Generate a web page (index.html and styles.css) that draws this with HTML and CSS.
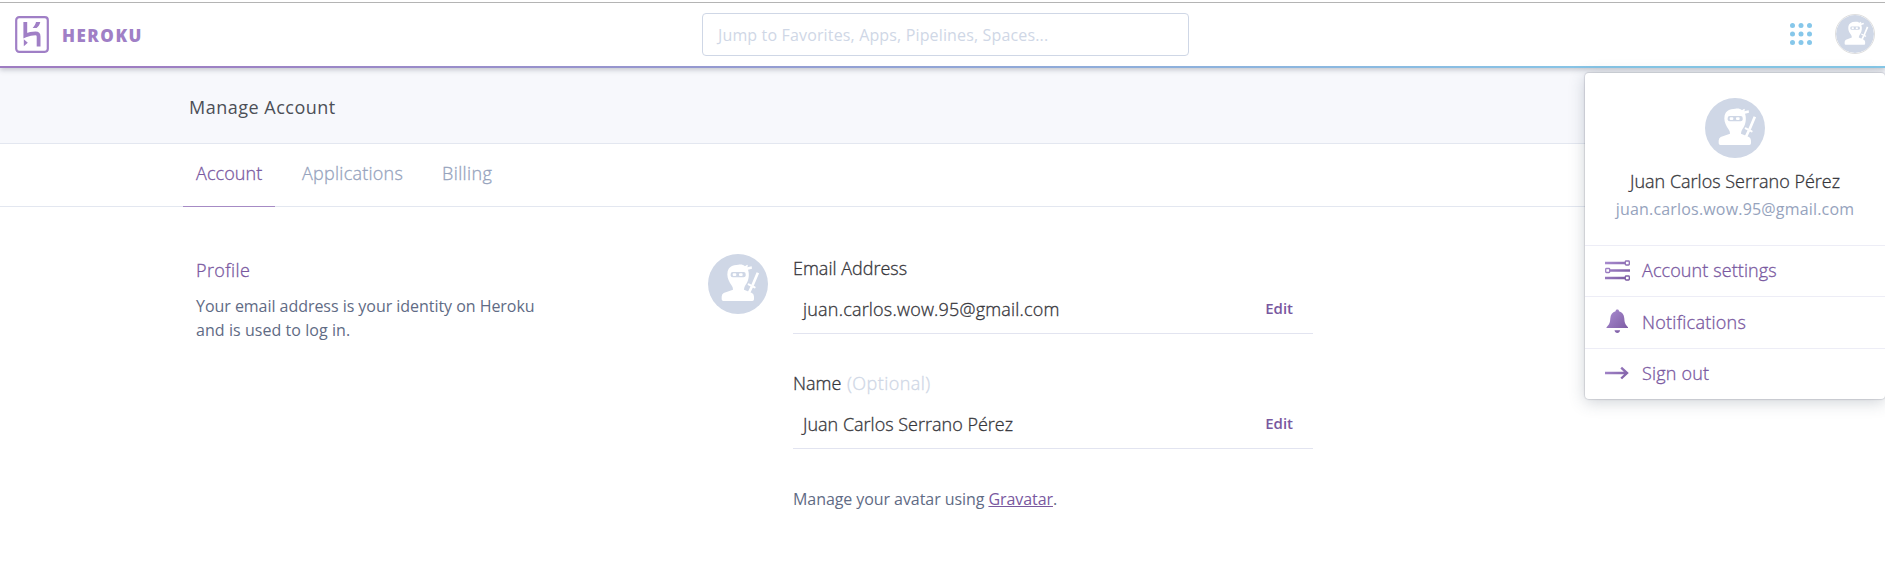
FILE: index.html
```
<!DOCTYPE html>
<html lang="en">
<head>
<meta charset="utf-8">
<title>Account · Heroku</title>
<link rel="stylesheet" href="styles.css">
</head>
<body>
<svg class="defs" width="0" height="0" aria-hidden="true">
  <defs>
    <linearGradient id="purple" gradientUnits="userSpaceOnUse" x1="2" y1="2" x2="23" y2="23">
      <stop offset="0" stop-color="#a88bcf"/><stop offset="1" stop-color="#79589f"/>
    </linearGradient>
    <symbol id="ninja" viewBox="0 0 180 180">
      <circle cx="90" cy="90" r="90" fill="#cfd7e6"/>
      <path fill="#fff" d="M91 32C101 31 107 33 111 37C113 35 115 33 118 32L120 36L117 40L131 37L132 44L120 47C125 61 122 77 116 88C112 94 108 100 108 107L132 117Q138 121 138 128V136Q138 141 133 141H46Q41 141 41 136V128Q41 121 47 117L75 107C75 99 71 94 66 87C60 76 56 66 59 52C62 39 73 33 91 32Z"/>
      <rect x="68" y="54" width="45" height="16" rx="6" fill="#cfd7e6"/>
      <rect x="74" y="58" width="11" height="8" rx="3" fill="#fff"/>
      <rect x="93" y="58" width="11" height="8" rx="3" fill="#fff"/>
      <path d="M148 60L135 91M130 101L122 118" stroke="#fff" stroke-width="8" stroke-linecap="square"/>
      <path d="M122 91L140 100" stroke="#fff" stroke-width="6" stroke-linecap="round"/>
    </symbol>
  </defs>
</svg>

<header class="topbar">
  <a class="brand">
    <svg class="brand-mark" viewBox="0 0 34 37">
      <rect x="1.2" y="1.2" width="31.6" height="34.6" rx="3" fill="none" stroke="#a07fc6" stroke-width="2.2"/>
      <path d="M10.3 6V19.6C14 18 17 17.3 20.5 17.3C23 17.3 23.6 18.4 23.6 20.5V30.5" fill="none" stroke="#a07fc6" stroke-width="3.8"/>
      <path d="M21 6H25.3C24.8 8.5 23.5 10.5 21.6 12H17.6C19.5 10 20.6 8.2 21 6ZM8.8 23.2L12.8 26.7L8.8 30.3Z" fill="#a07fc6"/>
    </svg>
    <span class="brand-name">HEROKU</span>
  </a>
  <div class="search"><span>Jump to Favorites, Apps, Pipelines, Spaces...</span></div>
  <div class="tools">
    <svg class="apps" viewBox="0 0 22 22" fill="#86c7ea">
      <circle cx="2.5" cy="2.5" r="2.5"/><circle cx="11" cy="2.5" r="2.5"/><circle cx="19.5" cy="2.5" r="2.5"/>
      <circle cx="2.5" cy="11" r="2.5"/><circle cx="11" cy="11" r="2.5"/><circle cx="19.5" cy="11" r="2.5"/>
      <circle cx="2.5" cy="19.5" r="2.5"/><circle cx="11" cy="19.5" r="2.5"/><circle cx="19.5" cy="19.5" r="2.5"/>
    </svg>
    <svg class="avatar-small"><use href="#ninja"/></svg>
  </div>
  <div class="menu">
    <div class="menu-user">
      <svg class="avatar"><use href="#ninja"/></svg>
      <div class="menu-name">Juan Carlos Serrano Pérez</div>
      <div class="menu-email">juan.carlos.wow.95@gmail.com</div>
    </div>
    <a class="menu-item">
      <svg class="menu-icon" viewBox="0 0 25 25" fill="none" stroke="url(#purple)">
        <path stroke-width="2.6" d="M0 5.01H20M5 12.5H25M0 20.01H20"/>
        <rect x="20.3" y="3" width="4" height="4" rx=".8" stroke-width="1.3"/>
        <rect x=".7" y="10.5" width="4" height="4" rx=".8" stroke-width="1.3"/>
        <rect x="20.3" y="18" width="4" height="4" rx=".8" stroke-width="1.3"/>
      </svg>
      <span>Account settings</span>
    </a>
    <a class="menu-item notifications">
      <svg class="menu-icon" viewBox="0 0 25 25" fill="url(#purple)">
        <path d="M12.3 0.5C13.4 .5 14 1.1 14 2.3C17.3 3.1 19 5.7 19.3 9.5C19.6 14 20.3 15.5 23 18.2V19H1.5V18.2C4.3 15.5 5 14 5.3 9.5C5.6 5.7 7.3 3.1 10.6 2.3C10.6 1.1 11.2 .5 12.3 .5ZM9.5 21.3H15.1C14.7 23.1 13.8 24 12.3 24S9.9 23.1 9.5 21.3Z"/>
      </svg>
      <span>Notifications</span>
    </a>
    <a class="menu-item sign-out">
      <svg class="menu-icon" viewBox="0 0 25 25" fill="none" stroke="url(#purple)" stroke-width="2.4">
        <path d="M0 12.01H22M16.2 6.7L22 12L16.2 17.5"/>
      </svg>
      <span>Sign out</span>
    </a>
  </div>
</header>

<div class="page-title"><h1>Manage Account</h1></div>

<nav class="tabs">
  <a class="tab active">Account</a>
  <a class="tab applications">Applications</a>
  <a class="tab billing">Billing</a>
</nav>

<main class="profile">
  <section class="intro">
    <h2>Profile</h2>
    <p>Your email address is your identity on Heroku<br><span class="intro-end">and is used to log in.</span></p>
  </section>
  <svg class="avatar"><use href="#ninja"/></svg>
  <section class="fields">
    <div class="field">
      <div class="label">Email Address</div>
      <div class="row"><span class="value email">juan.carlos.wow.95@gmail.com</span><a class="edit">Edit</a></div>
    </div>
    <div class="field">
      <div class="label name">Name <span class="optional">(Optional)</span></div>
      <div class="row"><span class="value">Juan Carlos Serrano Pérez</span><a class="edit">Edit</a></div>
    </div>
    <p class="hint">Manage your avatar using <a class="link">Gravatar</a>.</p>
  </section>
</main>
</body>
</html>
```
FILE: styles.css
```
* { box-sizing: border-box; }
body {
  margin: 0;
  height: 564px;
  overflow: hidden;
  background: #fff;
  color: #36363b;
  font: 300 18px/24px "Open Sans", "Noto Sans", sans-serif;
  white-space: nowrap;
}
h1, h2, p { margin: 0; font-weight: inherit; font-size: inherit; }
svg { display: block; flex: none; }
.defs { position: absolute; }

.topbar {
  position: relative;
  z-index: 1;
  display: grid;
  grid-template-columns: 702px 487px 1fr;
  height: 68px;
  padding-top: 10px;
  background:
    linear-gradient(#b4b4b4, #b4b4b4) 0 2px / 100% 1px no-repeat,
    linear-gradient(90deg, #9e7cc1, #9e7cc1 6%, #86c8e8 88%) 0 100% / 100% 2px no-repeat,
    #fff;
  box-shadow: 0 2px 5px rgba(60, 65, 80, .27);
}
.brand { display: flex; gap: 13px; padding: 6px 0 0 15px; }
.brand-mark { width: 34px; height: 37px; }
.brand-name {
  padding-top: 8px;
  color: #a07fc6;
  font-size: 17px;
  font-weight: 800;
  letter-spacing: 1.5px;
  line-height: 24px;
}
.search {
  height: 43px;
  margin-top: 3px;
  padding: 9px 15px;
  border: 1px solid #cfd7e6;
  border-radius: 4px;
  color: #cfd7e6;
  font-size: 16px;
  font-weight: 400;
  letter-spacing: .15px;
}
.tools { display: flex; justify-content: flex-end; gap: 23px; padding: 4px 10px 0 0; }
.apps { width: 22px; height: 22px; margin-top: 9px; }
.avatar-small { width: 40px; height: 40px; border: 1px solid #dedede; border-radius: 50%; }
.avatar { width: 60px; height: 60px; }

/* Light text gets a hairline stroke for a weight between light and regular. */
.menu-name, .menu-item, .tab, .intro h2, .label, .value {
  -webkit-text-stroke: .3px currentColor;
}

.menu {
  position: absolute;
  top: 73px;
  right: 0;
  width: 300px;
  height: 326px;
  border-radius: 4px;
  background: #fff;
  box-shadow: 0 0 1px 1px rgba(60, 70, 90, .16), 0 3px 16px rgba(60, 75, 95, .25);
}
.menu-user {
  display: flex;
  flex-direction: column;
  align-items: center;
  height: 172px;
  padding-top: 25px;
}
.menu-name { margin-top: 11px; line-height: 24px; }
.menu-email {
  margin-top: 4px;
  color: #96a3bd;
  font-size: 16px;
  font-weight: 400;
  letter-spacing: .18px;
}
.menu-item {
  display: flex;
  align-items: center;
  gap: 12px;
  height: 51px;
  padding: 0 0 2px 20px;
  border-top: 1px solid #ededf6;
  color: #79589f;
  letter-spacing: .1px;
}
.menu-icon { width: 25px; height: 25px; }
.notifications { height: 52px; letter-spacing: .25px; }
.sign-out { letter-spacing: .2px; }

.page-title {
  height: 76px;
  padding: 27px 0 0 189px;
  border-bottom: 1px solid #e3e7f0;
  background: #f7f8fc;
  color: #4c4f57;
  font-weight: 400;
  letter-spacing: .5px;
}
.tabs {
  display: flex;
  height: 63px;
  padding-left: 183px;
  border-bottom: 1px solid #e3e7f0;
  color: #96a3bd;
}
.tab { height: 63px; padding-top: 17px; }
.active {
  width: 92px;
  padding-left: 13px;
  border-bottom: 1px solid #a68bc5;
  color: #79589f;
  letter-spacing: .1px;
}
.applications { width: 141px; padding-left: 27px; letter-spacing: .25px; }
.billing { padding-left: 26px; letter-spacing: .4px; }

.profile {
  display: grid;
  grid-template-columns: 513px 60px 520px;
  padding: 47px 0 0 195px;
}
.intro { padding-left: 1px; }
.intro h2 { margin-top: 4px; color: #79589f; letter-spacing: .4px; }
.intro p { margin-top: 12px; color: #5f6b85; font-size: 16px; font-weight: 400; letter-spacing: -.04px; }
.intro-end { letter-spacing: .06px; }
.fields { margin-left: 25px; padding-top: 2px; }
.field { width: 520px; height: 115px; }
.row {
  display: flex;
  height: 42px;
  margin-top: 12px;
  padding: 5px 20px 0 10px;
  border-bottom: 1px solid #e2e4f0;
}
.email { letter-spacing: .2px; }
.optional { margin-left: 1px; color: #cfd7e6; letter-spacing: .45px; }
.edit {
  margin: -1px 0 0 auto;
  color: #79589f;
  font-size: 15px;
  font-weight: 600;
}
.hint { padding-top: 1px; color: #5f6b85; font-size: 16px; font-weight: 400; letter-spacing: -.07px; }
.link { color: #79589f; text-decoration: underline; }
```
